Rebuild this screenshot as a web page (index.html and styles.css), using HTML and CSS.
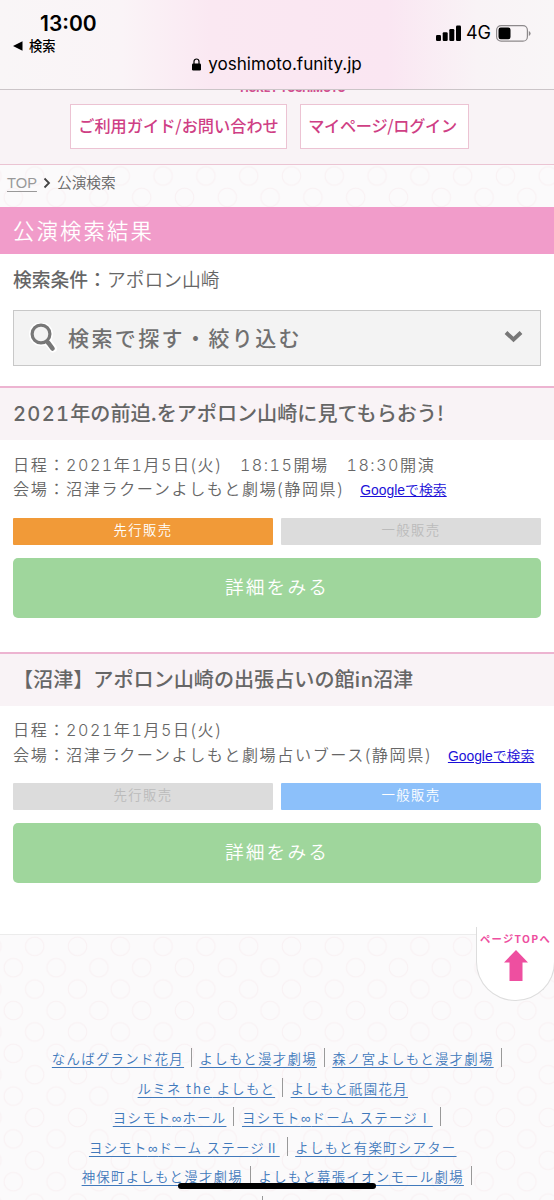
FILE: index.html
```
<!DOCTYPE html>
<html lang="ja">
<head>
  <meta charset="UTF-8" />
  <meta name="viewport" content="width=device-width, initial-scale=1.0"/>
  <title>公演検索結果</title>
  <link rel="stylesheet" href="styles.css">
</head>
<body>
  <div class="browser">
    <div class="status">
      <div class="status-left">
        <div class="time">13:00</div>
        <div class="back">
          <svg width="10" height="10" viewBox="0 0 10 10"><path d="M0 5L9.500 0.300V9.700Z"/></svg>
          <span>検索</span>
        </div>
      </div>
      <div class="status-right">
        <svg width="25" height="16" viewBox="0 0 25 16">
          <rect x="0" y="10" width="5" height="6" rx="1.200"/>
          <rect x="6.700" y="7.300" width="5" height="8.700" rx="1.200"/>
          <rect x="13.300" y="4" width="5" height="12" rx="1.200"/>
          <rect x="20" y="0.500" width="5" height="15.500" rx="1.200"/>
        </svg>
        <span class="net">4G</span>
        <svg width="35" height="17" viewBox="0 0 35 17">
          <rect x="0.600" y="0.600" width="30.800" height="15.600" rx="4.500" fill="none" stroke="#8d898b" stroke-width="1.200"/>
          <rect x="2.500" y="2.600" width="12" height="11.600" rx="2.200"/>
          <path d="M32.800 6v5q1.800-0.600 1.800-2.500t-1.800-2.500z" fill="#8d898b"/>
        </svg>
      </div>
    </div>
    <div class="address">
      <svg width="9" height="13" viewBox="0 0 9 13"><path d="M2 6V3.500a2.500 2.500 0 0 1 5 0V6" fill="none" stroke="#000" stroke-width="1.200"/><rect x="0" y="5.500" width="9" height="7" rx="1.200"/></svg>
      <span>yoshimoto.funity.jp</span>
    </div>
  </div>

  <header class="site-header">
    <div class="logo"><span>TICKET YOSHIMOTO</span></div>
    <nav class="header-nav">
      <a class="guide">ご利用ガイド/お問い合わせ</a>
      <a class="mypage">マイページ/ログイン</a>
    </nav>
  </header>

  <div class="breadcrumb">
    <a>TOP</a>
    <svg width="8" height="12" viewBox="0 0 8 12"><path d="M1.500 1.500L6 6L1.500 10.500" fill="none" stroke="#444" stroke-width="1.800"/></svg>
    <span>公演検索</span>
  </div>

  <main>
    <h1>公演検索結果</h1>
    <p class="condition"><b>検索条件：</b>アポロン山崎</p>
    <div class="search-box">
      <svg width="28" height="30" viewBox="0 0 28 30">
        <g fill="none" stroke="#fff"><circle cx="12" cy="11" r="9" stroke-width="6"/><path d="M18 18L24 25.500" stroke-width="8" stroke-linecap="round"/></g>
        <circle cx="12" cy="11" r="7.500" fill="#f3f3f3"/>
        <g fill="none" stroke="#777"><circle cx="12" cy="11" r="8.900" stroke-width="3.200"/><path d="M17 18L19 20.500" stroke-width="3"/><path d="M19.500 20L23.500 25.500" stroke-width="4.600" stroke-linecap="round"/></g>
      </svg>
      <span>検索で探す・絞り込む</span>
      <svg class="arrow" width="19" height="13" viewBox="0 0 19 13"><path d="M2 2.500L9.500 9.500L17 2.500" fill="none" stroke="#777" stroke-width="4"/></svg>
    </div>

    <section class="event">
      <h2><span class="num">2021</span>年の前迫.をアポロン山崎に見てもらおう!</h2>
      <div class="info">
        <p>日程：<span class="num">2021</span>年<span class="num">1</span>月<span class="num">5</span>日(火)　<span class="num">18:15</span>開場　<span class="num">18:30</span>開演</p>
        <p>会場：沼津ラクーンよしもと劇場(静岡県)<a>Googleで検索</a></p>
      </div>
      <div class="sales">
        <span class="presale">先行販売</span>
        <span>一般販売</span>
      </div>
      <a class="detail">詳細をみる</a>
    </section>

    <section class="event">
      <h2>【沼津】アポロン山崎の出張占いの館in沼津</h2>
      <div class="info">
        <p>日程：<span class="num">2021</span>年<span class="num">1</span>月<span class="num">5</span>日(火)</p>
        <p>会場：沼津ラクーンよしもと劇場占いブース(静岡県)<a>Googleで検索</a></p>
      </div>
      <div class="sales">
        <span>先行販売</span>
        <span class="general">一般販売</span>
      </div>
      <a class="detail">詳細をみる</a>
    </section>
  </main>

  <footer>
    <div class="links">
      <div class="line"><span><a>なんばグランド花月</a></span><span><a>よしもと漫才劇場</a></span><span><a>森ノ宮よしもと漫才劇場</a></span></div>
      <div class="line open"><span><a>ルミネ <em>the</em> よしもと</a></span><span><a>よしもと祇園花月</a></span></div>
      <div class="line"><span><a>ヨシモト<i>∞</i>ホール</a></span><span><a>ヨシモト<i>∞</i>ドーム ステージⅠ</a></span></div>
      <div class="line open"><span><a>ヨシモト<i>∞</i>ドーム ステージⅡ</a></span><span><a>よしもと有楽町シアター</a></span></div>
      <div class="line"><span><a>神保町よしもと漫才劇場</a></span><span><a>よしもと幕張イオンモール劇場</a></span></div>
      <div class="line last"><span></span></div>
    </div>
  </footer>

  <a class="page-top">
    <span>ページTOPへ</span>
    <svg width="24" height="31" viewBox="0 0 24 31"><path d="M12 0L24 12.500H18.500V31H5.500V12.500H0Z"/></svg>
  </a>
  <div class="home-bar"></div>
</body>
</html>
```
FILE: styles.css
```
* {
  box-sizing: border-box;
}
body {
  position: relative;
  margin: 0;
  height: 1200px;
  overflow: hidden;
  font-family: "Noto Sans CJK JP", sans-serif;
  font-weight: 350;
  color: #666;
  background-color: #fbfafb;
  background-image:
    radial-gradient(circle, transparent 8.2px, #f9f2f4 9px, #f9f2f4 9.4px, transparent 10.2px),
    radial-gradient(circle, transparent 8.2px, #f9f2f4 9px, #f9f2f4 9.4px, transparent 10.2px);
  background-size: 42.8px 42.8px;
  background-position: 13.3px 154.6px, -8.1px 176px;
}
p, h1, h2 {
  margin: 0;
}

/* browser bar */
.browser {
  height: 90px;
  border-bottom: 1px solid #cbc5c8;
  background: linear-gradient(90deg, #f9f6f7 0%, #faf4f7 22%, #fae8f2 38%, #fae6f2 70%, #f9f3f6 86%, #f9f6f7 100%);
  color: #000;
}
.status {
  display: flex;
  justify-content: space-between;
  height: 53px;
  padding: 12px 23px 0 13px;
}
.time {
  padding-left: 27px;
  font: 600 21px/23px Inter, sans-serif;
}
.back {
  display: flex;
  align-items: center;
  gap: 6px;
  font-size: 13.3px;
  line-height: 21px;
  font-weight: 500;
}
.status-right {
  display: flex;
  align-items: center;
  height: 20px;
  margin-top: 11px;
}
.net {
  margin: 0 5px;
  font: 400 18px/20px Inter, sans-serif;
}
.address {
  display: flex;
  justify-content: center;
  align-items: center;
  gap: 7px;
  height: 22px;
  font: 400 17.1px/22px Inter, sans-serif;
}

/* site header */
.site-header {
  height: 75px;
  background: #f9f3f6;
  border-bottom: 1px solid #ebc4d3;
}
.logo {
  display: flex;
  justify-content: center;
  align-items: flex-end;
  height: 4px;
  margin-bottom: 10px;
  padding-left: 30px;
  overflow: hidden;
  font: 800 10.5px/10px Inter, sans-serif;
  color: #d0508f;
}
.header-nav {
  display: flex;
  gap: 13px;
  padding-left: 70px;
}
.header-nav a {
  height: 45px;
  border: 1px solid #ecc3d3;
  background: #fff;
  text-align: center;
  font-size: 16.2px;
  line-height: 41px;
  font-weight: 500;
  color: #cf3f85;
}
.guide {
  width: 217px;
}
.header-nav .mypage {
  width: 169px;
  padding-right: 4px;
  letter-spacing: -0.3px;
}

.breadcrumb {
  display: flex;
  align-items: center;
  gap: 6px;
  height: 42px;
  padding: 0 7px 7px;
  font-size: 14.7px;
}
.breadcrumb a {
  color: #999;
  font-family: "Liberation Sans", sans-serif;
  text-decoration: underline;
  text-underline-offset: 3px;
}
.breadcrumb span {
  margin-top: -2px;
}

/* search result */
main {
  height: 728px;
  background: #fff;
  border-bottom: 1px solid #ececec;
}
h1 {
  height: 47px;
  padding-left: 13px;
  background: #f19cca;
  color: #fff;
  font-size: 21.3px;
  line-height: 45px;
  font-weight: 350;
  letter-spacing: 2.2px;
}
.condition {
  padding: 11px 13px 18px;
  font-size: 18.8px;
  line-height: 27px;
}
.condition b {
  font-weight: 500;
}
.search-box {
  display: flex;
  align-items: center;
  height: 56px;
  margin: 0 13px 20px;
  padding: 0 17px 0 15px;
  border: 1px solid #c8c8c8;
  background: #f3f3f3;
  color: #707070;
  font-size: 21px;
  line-height: 52px;
  font-weight: 500;
  letter-spacing: 2.4px;
}
.search-box span {
  flex: 1;
  padding-left: 11px;
  margin-top: -2px;
}
.arrow {
  margin-bottom: 4px;
}

.event {
  height: 265.5px;
}
h2 {
  height: 54px;
  padding-left: 13px;
  border-top: 2px solid #edb4d1;
  background: #f9f3f6;
  font-size: 20.1px;
  line-height: 50px;
  font-weight: 500;
  color: #666;
  white-space: nowrap;
}
.num {
  font-family: Inter, sans-serif;
  font-variant-numeric: tabular-nums;
}
h2 .num {
  letter-spacing: 1.3px;
}
.info {
  padding: 11.5px 13px 17px;
  font-size: 16.1px;
  line-height: 24.5px;
  letter-spacing: 1.6px;
  white-space: nowrap;
}
.info p {
  height: 24.5px;
}
.info .num {
  font-weight: 300;
  letter-spacing: 1.5px;
}
.info a {
  margin-left: 16px;
  font-family: "Liberation Sans", "Noto Sans CJK JP", sans-serif;
  font-size: 13.9px;
  letter-spacing: 0;
  color: #1a0fd8;
  text-decoration: underline;
}
.sales {
  display: flex;
  gap: 8px;
  padding: 0 13px;
}
.sales span {
  flex: 1;
  height: 27px;
  border-radius: 1px;
  background: #dcdcdc;
  color: #bbb;
  text-align: center;
  font-size: 13.4px;
  line-height: 23px;
  letter-spacing: 1.4px;
}
.sales .presale {
  background: #f19a38;
  color: #fff;
}
.sales .general {
  background: #8cc0fa;
  color: #fff;
}
.detail {
  display: block;
  height: 60px;
  margin: 13px 13px 0;
  border-radius: 5px;
  background: #9fd69c;
  color: #fff;
  text-align: center;
  font-size: 18.7px;
  line-height: 56px;
  letter-spacing: 2.1px;
}

/* footer */
.links {
  padding: 109px 0 0 7px;
}
.line {
  display: flex;
  justify-content: center;
  height: 29.5px;
  font-size: 13.4px;
  line-height: 29px;
  letter-spacing: 1.3px;
  white-space: nowrap;
}
.line span {
  display: flex;
  padding-right: 7px;
  margin-right: 7.5px;
}
.line span::after {
  content: "";
  width: 1px;
  height: 19px;
  margin: 4px -7px 0 7px;
  background: #999;
}
.line.open span:last-child::after {
  background: none;
}
.line.last {
  padding-right: 36px;
}
.line a {
  color: #4179bb;
  text-decoration: underline;
  text-underline-offset: 3px;
}
.line i {
  font-style: normal;
  font-family: "Liberation Sans", sans-serif;
}
.line em {
  font-style: normal;
  letter-spacing: 2px;
}

.page-top {
  position: absolute;
  left: 476px;
  top: 927px;
  display: flex;
  flex-direction: column;
  align-items: center;
  width: 79px;
  height: 74px;
  border: 1px solid #ddd;
  border-top: none;
  border-radius: 0 0 39px 39px;
  background: #fff;
  color: #ee4fa0;
  font-size: 10.3px;
  line-height: 23px;
  font-weight: 700;
  letter-spacing: 1.3px;
  white-space: nowrap;
}
.page-top svg {
  fill: #ee4fa0;
}
.home-bar {
  position: absolute;
  left: 178px;
  top: 1183px;
  width: 198px;
  height: 6px;
  border-radius: 3px;
  background: #000;
}
```
